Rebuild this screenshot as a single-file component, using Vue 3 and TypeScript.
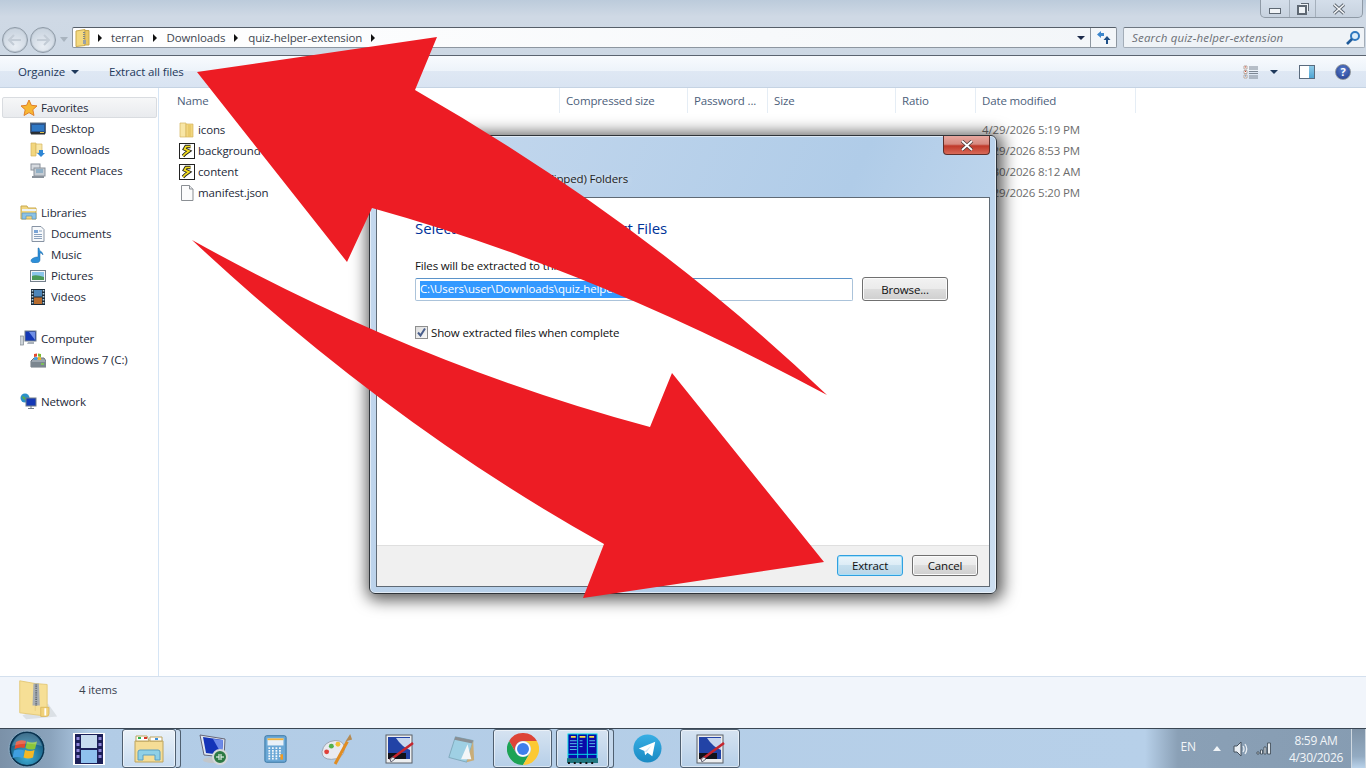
<template>
  <div class="screen">
    <div class="explorer">
      <header class="chrome">
        <div class="caption">
          <div class="caption-btns">
            <button class="cap"><span class="min-glyph"></span></button>
            <button class="cap cap-restore"><span class="restore-glyph"></span></button>
            <button class="cap cap-close">
              <svg width="14" height="12" viewBox="0 0 14 12"><path d="M2 1.500l10 9M12 1.500l-10 9" stroke="#5d6670" stroke-width="3.400" /><path d="M2 1.500l10 9M12 1.500l-10 9" stroke="#f4f6f8" stroke-width="1.600" /></svg>
            </button>
          </div>
        </div>
        <div class="navrow">
          <div class="navbtns">
            <span class="round"><svg width="16" height="12" viewBox="0 0 16 12"><path d="M7 1L2 6l5 5M2 6h12" fill="none" stroke="#c3ccd6" stroke-width="2" /></svg></span>
            <span class="round"><svg width="16" height="12" viewBox="0 0 16 12"><path d="M9 1l5 5-5 5M14 6H2" fill="none" stroke="#c3ccd6" stroke-width="2" /></svg></span>
            <span class="nav-drop"></span>
          </div>
          <div class="address">
            <svg class="addr-zip" width="15" height="18" viewBox="0 0 15 18"><path d="M1 2l9-1.500v16l-9 1z" fill="#f4d97f" stroke="#c9a94f" /><path d="M10 1.500h4V16h-4z" fill="#e9c765" stroke="#c9a94f" /><path d="M9 3v9" stroke="#80868c" stroke-width="2" stroke-dasharray="1 1" /><rect x="8" y="11" width="3" height="4" fill="#9aa2a8" /></svg>
            <span class="crumb-arrow first"></span>
            <span class="crumb">terran</span>
            <span class="crumb-arrow"></span>
            <span class="crumb">Downloads</span>
            <span class="crumb-arrow"></span>
            <span class="crumb">quiz-helper-extension</span>
            <span class="crumb-arrow"></span>
            <span class="addr-fill"></span>
            <span class="addr-drop"></span>
            <span class="addr-refresh">
              <svg width="15" height="15" viewBox="0 0 15 15"><path d="M5 1L1 4.500 5 8V6h3V3H5z" fill="#3c86cc" /><path d="M10 14v-4H7.500l3.500-4 3.500 4H12v4z" fill="#1e4f86" /></svg>
            </span>
          </div>
          <div class="search">
            <span>Search quiz-helper-extension</span>
            <svg width="16" height="16" viewBox="0 0 16 16"><circle cx="10" cy="6" r="4" fill="#dcedfa" stroke="#2f78bf" stroke-width="2" /><path d="M7 9l-5 5" stroke="#1f5a99" stroke-width="2.600" /></svg>
          </div>
        </div>
      </header>

      <div class="toolbar">
        <span class="tool">Organize<i class="tri"></i></span>
        <span class="tool extract-all">Extract all files</span>
        <span class="tool-fill"></span>
        <svg class="view-icon" width="16" height="14" viewBox="0 0 16 14"><path d="M1 1h3v3H1zM1 5.500h3v3H1zM1 10h3v3H1z" fill="#fff" stroke="#b9a9a0" /><path d="M2 2h1M2 6.500h1" stroke="#d2432f" /><path d="M2 11h1" stroke="#3c7fc4" /><path d="M6 2h9M6 4h9M6 6.500h9M6 8.500h9M6 11h9M6 13h9" stroke="#7c8794" /></svg>
        <i class="tri dark"></i>
        <span class="pane-icon"><span></span></span>
        <span class="help">?</span>
      </div>

      <div class="body">
        <aside class="sidebar">
          <section v-for="group in navGroups" :key="group.title" class="nav-group">
            <div class="nav-head" :class="{ selected: group.selected }">
              <svg width="18" height="18" viewBox="0 0 18 18" v-html="icons[group.icon]"></svg>
              <span>{{ group.title }}</span>
            </div>
            <div v-for="item in group.items" :key="item.label" class="nav-item">
              <svg width="16" height="16" viewBox="0 0 16 16" v-html="icons[item.icon]"></svg>
              <span>{{ item.label }}</span>
            </div>
          </section>
        </aside>

        <main class="files">
          <div class="columns">
            <span v-for="col in columns" :key="col.name" class="col" :style="{ width: col.width + 'px' }">{{ col.name }}</span>
          </div>
          <div class="rows">
            <div v-for="row in rows" :key="row.name" class="row">
              <span class="row-name">
                <svg width="16" height="16" viewBox="0 0 16 16" v-html="icons[row.icon]"></svg>
                <span>{{ row.name }}</span>
              </span>
              <span class="row-date">{{ row.date }}</span>
            </div>
          </div>
        </main>
      </div>

      <footer class="details">
        <svg class="big-zip" width="42" height="42" viewBox="0 0 46 44">
          <path d="M34 26l10 14-34 3-4-4z" fill="#c9ced3" opacity=".55" />
          <path d="M3 1l17 3 13 1v33l-6 1-24-3z" fill="#f6df96" stroke="#e3c877" />
          <path d="M20 4v30" stroke="#e8cd7e" />
          <path d="M18 4h6l1 24h-8z" fill="#a7adb2" />
          <path d="M21 5v24" stroke="#5f666c" stroke-width="2" stroke-dasharray="1 1" />
          <path d="M26 30h9v7a3 3 0 0 1-3 3h-6z" fill="#f1d27a" stroke="#dcb95f" />
          <path d="M31 31v8" stroke="#fff" stroke-width="2" />
        </svg>
        <span>4 items</span>
      </footer>
    </div>

    <div class="taskbar">
      <span class="start">
        <svg width="38" height="38" viewBox="0 0 38 38">
          <defs>
            <radialGradient id="orb" cx=".5" cy=".75" r=".8"><stop offset="0" stop-color="#3fb0d8" /><stop offset="1" stop-color="#0d4468" /></radialGradient>
          </defs>
          <circle cx="19" cy="19" r="18" fill="#0b3350" stroke="#8fb0c8" />
          <circle cx="19" cy="19" r="16" fill="url(#orb)" />
          <path d="M8 12q4-3 10-1l-1.500 7q-5-1.500-10 1z" fill="#e1492e" />
          <path d="M19 11.500q5 2 10 0l-2 7.500q-5 1.500-9.500-1z" fill="#8bc53a" />
          <path d="M6 20.500q5-2 10 0L14.500 28q-5-2-10 0z" fill="#3f9fe0" />
          <path d="M17 20q5 2 9.500 0L25 27.500q-5 2-9.500 0z" fill="#f5b826" />
          <path d="M4 16Q8 3 19 3t15 13q-15-5-30 0z" fill="#fff" opacity=".2" />
        </svg>
      </span>
      <span class="task video"><svg width="32" height="32" viewBox="0 0 32 32"><rect width="32" height="32" fill="#fff" /><rect x="2" y="1" width="28" height="30" fill="#1c2058" /><rect x="8" y="2" width="16" height="13" fill="#c8dcef" /><rect x="8" y="17" width="16" height="13" fill="#8fc1ee" /><path d="M5 4v24M27 4v24" stroke="#8d86d8" stroke-width="3" stroke-dasharray="3 3" /></svg></span>
      <span class="task open active explorer-btn"><svg width="32" height="30" viewBox="0 0 32 30"><path d="M2 7h28v21H2z" fill="#f5dd96" stroke="#bda45e" /><path d="M3 2h11l2 5H3zM17 3h12v4H17z" fill="#fff" stroke="#bda45e" /><path d="M5 3h3v2H5z" fill="#2eb34a" /><path d="M11 3h3v2h-3z" fill="#d8352b" /><path d="M22 4h3v2h-3z" fill="#3c8fd8" /><path d="M5 26v-8q0-2 2-2h18q2 0 2 2v8h-5v-5H10v5z" fill="#8fd0e6" stroke="#5a9fc2" /></svg></span>
      <span class="sep"></span>
      <span class="task"><svg width="32" height="32" viewBox="0 0 32 32"><path d="M3 2l25 4-1 18-20-2z" fill="#dfe6f0" stroke="#667" /><path d="M6 4l20 3-1 15-16-2z" fill="#1434b8" /><path d="M16 6l10 1-1 15z" fill="#6d8ae8" /><ellipse cx="15" cy="27" rx="9" ry="3" fill="#c2c6ca" /><circle cx="23" cy="24" r="7" fill="#2d7a44" stroke="#d5d8da" stroke-width="2" /><path d="M19 24h3M24 24h3M22 21v6M24 21v6" stroke="#fff" /></svg></span>
      <span class="task"><svg width="23" height="30" viewBox="0 0 26 32"><rect x="1" y="1" width="24" height="30" rx="2" fill="#6ba8d6" stroke="#2f6f9e" /><rect x="4" y="4" width="18" height="8" fill="#e9f1f8" /><rect x="4" y="4" width="18" height="2" fill="#f2b33d" /><path d="M5 15h16M5 18h16M5 21h16M5 24h16M5 27h12" stroke="#f4f8fb" stroke-width="2" stroke-dasharray="2 2" /><path d="M20 22v6" stroke="#f29a20" stroke-width="3" /></svg></span>
      <span class="task"><svg width="32" height="34" viewBox="0 0 34 36"><path d="M1 21q2-11 14-12 10 0 10 9-1 11-14 11-10 0-10-8z" fill="#e9eaf0" stroke="#9aa3b0" /><circle cx="6" cy="21" r="2.600" fill="#e0403a" /><circle cx="11" cy="15" r="2.600" fill="#53b14c" /><circle cx="18" cy="13" r="2.600" fill="#f2c034" /><path d="M15 34l13-24" stroke="#e08c22" stroke-width="3.200" /><path d="M26 10l5-8 2 6z" fill="#b58a52" /></svg></span>
      <span class="task"><svg width="32" height="32" viewBox="0 0 32 32" v-html="icons.paint"></svg></span>
      <span class="task"><svg width="30" height="32" viewBox="0 0 32 32"><path d="M10 3l19 4-7 23-19-5z" fill="#9fd0e4" stroke="#7fa9bb" /><path d="M10 3l19 4-1 3-19-4z" fill="#8a8f93" /><path d="M29 7l1 21-8 2z" fill="#c9ad78" /><path d="M16 27l7-16 4 16z" fill="#f3f6f8" /></svg></span>
      <span class="task open chrome-btn"><svg width="32" height="32" viewBox="0 0 32 32"><path d="M2.140 8A16 16 0 0 1 29.860 8H16A8 8 0 0 0 9.070 20z" fill="#dd4437" /><path d="M2.140 8L9.070 20A8 8 0 0 0 22.930 20L16 32A16 16 0 0 1 2.140 8z" fill="#1da355" /><path d="M29.860 8H16A8 8 0 0 1 22.930 20L16 32A16 16 0 0 0 29.860 8z" fill="#fcc934" /><circle cx="16" cy="16" r="7.500" fill="#fff" /><circle cx="16" cy="16" r="6" fill="#3f7fec" /></svg></span>
      <span class="task open term-btn"><svg width="31" height="31" viewBox="0 0 32 32"><rect x="1" y="1" width="30" height="26" fill="#0a0aa8" stroke="#08e0e6" /><path d="M11 1v26M21 1v26M1 22h30" stroke="#08e0e6" /><path d="M4 4h5M13 4h6M23 4h5" stroke="#f5e04a" stroke-width="2" /><path d="M3 8h7M3 11h7M3 14h7M3 17h7M13 8h3M13 11h3M13 14h3M23 8h6M23 11h6M23 14h6" stroke="#5cc2ec" /><rect y="26" width="32" height="5" fill="#1f7680" /><path d="M1 31h30" stroke="#111" stroke-width="2" stroke-dasharray="2 4" /></svg></span>
      <span class="sep"></span>
      <span class="task telegram"><svg width="29" height="29" viewBox="0 0 30 30"><defs><linearGradient id="tg" x1="0" y1="0" x2="0" y2="1"><stop offset="0" stop-color="#38aee4" /><stop offset="1" stop-color="#1a8ac3" /></linearGradient></defs><circle cx="15" cy="15" r="14.500" fill="url(#tg)" /><path d="M6 15l17-7-3 15-5-3.500-2.500 2.500-.7-4.500z" fill="#fff" /><path d="M12 18l7-6-5 7z" fill="#d3e6f3" /></svg></span>
      <span class="task open paint-btn"><svg width="32" height="32" viewBox="0 0 32 32" v-html="icons.paint"></svg></span>
      <span class="task-fill"></span>
      <div class="tray">
        <span class="lang">EN</span>
        <span class="tray-up"></span>
        <svg class="speaker" width="16" height="16" viewBox="0 0 16 16"><path d="M1 5h3l4-4v14l-4-4H1z" fill="#e9eef3" stroke="#44505c" /><path d="M10 5q2 3 0 6M12 3q3.500 5 0 10" fill="none" stroke="#e9eef3" stroke-width="1.300" /></svg>
        <svg class="signal" width="16" height="13" viewBox="0 0 16 13"><path d="M1 10h2v2H1zM4.500 8h2v4h-2zM8 5h2v7H8zM11.500 1h3v11h-3z" fill="#e7ecf0" stroke="#39454f" stroke-width=".8" /></svg>
        <div class="clock"><span>8:59 AM</span><span>4/30/2026</span></div>
        <span class="show-desktop"></span>
      </div>
    </div>

    <div class="dialog">
      <div class="dlg-head">
        <span class="dlg-close"><svg width="14" height="11" viewBox="0 0 14 11"><path d="M2 1l10 9M12 1L2 10" stroke="#4d3a38" stroke-width="3.400" /><path d="M2 1l10 9M12 1L2 10" stroke="#fff" stroke-width="1.800" /></svg></span>
        <span class="dlg-title">Extract Compressed (Zipped) Folders</span>
      </div>
      <div class="dlg-body">
        <div class="dlg-main">
          <h1>Select a Destination and Extract Files</h1>
          <label class="dest-label">Files will be extracted to this folder:</label>
          <div class="dest-row">
            <div class="dest-input"><span class="sel">C:\Users\user\Downloads\quiz-helper-extension</span></div>
            <button class="btn browse">Browse...</button>
          </div>
          <div class="check-row">
            <span class="check"><svg width="11" height="11" viewBox="0 0 11 11"><path d="M2 5.500l2.500 3L9 1.500" fill="none" stroke="#4a5f8c" stroke-width="2" /></svg></span>
            <span>Show extracted files when complete</span>
          </div>
        </div>
        <div class="dlg-foot">
          <button class="btn primary">Extract</button>
          <button class="btn">Cancel</button>
        </div>
      </div>
    </div>

    <svg class="arrows" width="1366" height="768" viewBox="0 0 1366 768">
      <path d="M197 72L437 37 415 90Q647 223 827 395Q595 270 372 208L347 262z" fill="#ed1c24" />
      <path d="M192 240Q415 364 650 427L672 373 824 562 583 598 604 544Q390 425 192 240z" fill="#ed1c24" />
    </svg>
  </div>
</template>

<script setup lang="ts">
interface NavItem {
  label: string
  icon: string
}

interface NavGroup {
  title: string
  icon: string
  selected?: boolean
  items: NavItem[]
}

const folder = '<path d="M1 1h6v14H1z" fill="#f8e6a6" stroke="#d5b45e" stroke-width=".7"/><path d="M7 2h7v13H7z" fill="#f2d67e" stroke="#d5b45e" stroke-width=".7"/><path d="M9 3h3v12H9z" fill="#e5c465" opacity=".7"/>'

const script = '<rect x=".5" y=".5" width="15" height="15" fill="#fff" stroke="#222"/><path d="M11.500 3.500H7L5.500 6l4.500 2-3.500 2.500L4 13" fill="none" stroke="#222" stroke-width="3.400"/><path d="M11.500 3.500H7L5.500 6l4.500 2-3.500 2.500L4 13" fill="none" stroke="#f1dc1e" stroke-width="1.700"/>'

const icons: Record<string, string> = {
  star: '<path d="M9 1l2.400 5.300 5.600.6-4.200 3.800 1.200 5.800L9 13.600l-5 2.900 1.200-5.800L1 6.900l5.600-.6z" fill="#f7b733" stroke="#e0802a"/>',
  desktop: '<rect x=".5" y="2" width="15" height="10" fill="#28548f" stroke="#5b6b7c"/><path d="M2 4h12v6H2z" fill="#2f78c4"/><path d="M1 11h14v2.500H1z" fill="#2b2f33"/><path d="M10 11.500h4" stroke="#e3c34d"/>',
  downloads: '<path d="M1 1h5v13H1z" fill="#f2d67e" stroke="#d5b45e" stroke-width=".7"/><path d="M6 2h6v9H6z" fill="#f8e6a6" stroke="#d5b45e" stroke-width=".7"/><path d="M9 8h4v3h2l-4 4-4-4h2z" fill="#2f86d4"/>',
  recent: '<rect x="1" y="1" width="9" height="6" fill="#d7dbe0" stroke="#8a929b"/><rect x="4" y="5" width="11" height="8" fill="#c5ccd3" stroke="#8a929b"/><path d="M6 7h7M6 9h7" stroke="#5d93b8"/><path d="M2 14h12" stroke="#8a929b" stroke-width="2"/>',
  libraries: '<path d="M1 2h6l1 2h8v11H1z" fill="#f2d67e" stroke="#c9a94f"/><path d="M2 5h14v2H2z" fill="#eef3f7"/><path d="M2 15v-6h14v6h-4v-3H6v3z" fill="#8cc3e6" stroke="#5a93ba" stroke-width=".7"/>',
  documents: '<path d="M2 .5h9l3 3V15.500H2z" fill="#f7f9fb" stroke="#8793a3"/><path d="M4 4h4v3H4z" fill="#7ba5d6"/><path d="M4 8.500h8M4 10.500h8M4 12.500h8M9 5h3" stroke="#8aa1bd"/>',
  music: '<path d="M9 1c0 4 4 3 4 7-1-2-3-2-3-2v7c0 2-2 3-5 3-3 0-4-1-4-2.500S4 10 8 10V1z" fill="#2d8fd8" stroke="#1f6ba8" stroke-width=".5"/>',
  pictures: '<rect x=".5" y="2.500" width="15" height="11" fill="#f4f6f8" stroke="#737f8b"/><path d="M2 4h12v5H2z" fill="#8bc6ea"/><path d="M2 8q4-2 12 1v3H2z" fill="#4a9957"/>',
  videos: '<rect x="1" y="0" width="14" height="16" fill="#1c2a38"/><rect x="4" y="1" width="8" height="6.500" fill="#4d85b8"/><rect x="4" y="8.500" width="8" height="6.500" fill="#b66c2f"/><path d="M2.500 1v14M13.500 1v14" stroke="#b6d3e4" stroke-width="1.600" stroke-dasharray="1.500 1.500"/>',
  computer: '<rect x="5" y="1" width="11" height="10" fill="#1438b6" stroke="#6f7c88"/><path d="M9 2h6v8z" fill="#6f8fe6"/><path d="M8 12h6v2H7z" fill="#aab2ba"/><rect x="0" y="6" width="3.500" height="9" fill="#cdd3d8" stroke="#7b858e" stroke-width=".7"/>',
  drive: '<path d="M1 9l3-3h10l2 3v6H1z" fill="#9ca6af" stroke="#6a747d"/><path d="M1 10h15v5H1z" fill="#7b868f"/><path d="M11 12h3" stroke="#7cd04a" stroke-width="1.500"/><path d="M4 2l3-.5v3L4 5z" fill="#e1492e"/><path d="M8 1.500l3 .5v3l-3-.5z" fill="#7ab92f"/><path d="M4 5.500l3-.5v3H4z" fill="#3f9fe0"/><path d="M8 5l3 .5V8H8z" fill="#f0b322"/>',
  network: '<circle cx="5" cy="5" r="4.500" fill="#2b8fc9"/><path d="M2 3l3 1 1 3-3-1z" fill="#59ad4c"/><rect x="6" y="5" width="10" height="8" fill="#1438b6" stroke="#707c88"/><path d="M11 13v2M8 15.500h6" stroke="#707c88"/>',
  file: '<path d="M2.500.5h8l3.500 3.500v11.500H2.500z" fill="#fcfcfc" stroke="#8b8f94"/><path d="M10.500.5V4H14" fill="#e8eaec" stroke="#8b8f94"/>',
  folder,
  script,
  paint: '<rect x="3" y="2" width="26" height="28" fill="#eceef0" stroke="#595f66"/><rect x="5" y="4" width="22" height="22" fill="#2243a6"/><path d="M13 5l14 0v12q-8-3-14-12z" fill="#c7d6ee"/><path d="M5 20h18v6H5z" fill="#11121a"/><path d="M7 27L30 10" stroke="#c6252e" stroke-width="2.600"/><path d="M8 29l4-3-2-2-3 2z" fill="#e8e8e8" stroke="#667"/>',
}

const navGroups: NavGroup[] = [
  {
    title: 'Favorites',
    icon: 'star',
    selected: true,
    items: [
      { label: 'Desktop', icon: 'desktop' },
      { label: 'Downloads', icon: 'downloads' },
      { label: 'Recent Places', icon: 'recent' },
    ],
  },
  {
    title: 'Libraries',
    icon: 'libraries',
    items: [
      { label: 'Documents', icon: 'documents' },
      { label: 'Music', icon: 'music' },
      { label: 'Pictures', icon: 'pictures' },
      { label: 'Videos', icon: 'videos' },
    ],
  },
  {
    title: 'Computer',
    icon: 'computer',
    items: [{ label: 'Windows 7 (C:)', icon: 'drive' }],
  },
  { title: 'Network', icon: 'network', items: [] },
]

const columns = [
  { name: 'Name', width: 401 },
  { name: 'Compressed size', width: 128 },
  { name: 'Password ...', width: 80 },
  { name: 'Size', width: 128 },
  { name: 'Ratio', width: 80 },
  { name: 'Date modified', width: 160 },
]

const rows = [
  { name: 'icons', icon: 'folder', date: '4/29/2026 5:19 PM' },
  { name: 'background', icon: 'script', date: '4/29/2026 8:53 PM' },
  { name: 'content', icon: 'script', date: '4/30/2026 8:12 AM' },
  { name: 'manifest.json', icon: 'file', date: '4/29/2026 5:20 PM' },
]
</script>

<style>
html,
body {
  margin: 0;
  overflow: hidden;
}
</style>

<style scoped>
.screen {
  position: relative;
  width: 1366px;
  height: 768px;
  overflow: hidden;
  display: flex;
  flex-direction: column;
  font-family: "Open Sans", "Noto Sans", sans-serif;
  font-size: 11.5px;
  letter-spacing: -0.14px;
  color: #1e2a3a;
  background: #fff;
}

.explorer {
  flex: 1;
  min-height: 0;
  display: flex;
  flex-direction: column;
}

button {
  font: inherit;
  letter-spacing: inherit;
  color: inherit;
  padding: 0;
}

.chrome {
  height: 56px;
  flex: none;
  box-sizing: border-box;
  background: linear-gradient(#bccbdb, #cfd9e5 30%, #cdd8e4);
  border-bottom: 1px solid #5b6470;
}

.caption {
  height: 18px;
  display: flex;
  justify-content: flex-end;
  padding-right: 3px;
}

.caption-btns {
  display: flex;
  height: 17px;
  border: 1px solid #8f9aa6;
  border-top: none;
  border-radius: 0 0 5px 5px;
  background: linear-gradient(#d4deea, #c7d2df);
}

.cap {
  width: 26px;
  border: none;
  border-left: 1px solid #a5b0bc;
  background: transparent;
  display: flex;
  align-items: center;
  justify-content: center;
}

.cap:first-child {
  border-left: none;
  width: 28px;
}

.cap-close {
  width: 47px;
}

.min-glyph {
  width: 10px;
  height: 4px;
  margin-top: 4px;
  background: #f1f4f7;
  border: 1px solid #5e6873;
}

.restore-glyph {
  width: 6px;
  height: 6px;
  margin: 2px 2px 0 0;
  background: #eef2f6;
  border: 2px solid #5e6873;
  box-shadow: 2px -2px 0 -1px #eef2f6, 3px -3px 0 -1px #5e6873;
}

.navrow {
  height: 37px;
  display: flex;
  align-items: flex-start;
  padding: 9px 1px 0 2px;
}

.navbtns {
  display: flex;
  align-items: center;
  width: 70px;
  height: 27px;
  margin-top: -1px;
  flex: none;
}

.round {
  width: 24px;
  height: 24px;
  margin-right: 2px;
  border: 1px solid #8d99a6;
  border-radius: 50%;
  background: radial-gradient(circle at 50% 75%, #e9eef4, #ccd6e1 70%);
  box-shadow: inset 0 0 0 1px #bfc9d3;
  display: flex;
  align-items: center;
  justify-content: center;
}

.nav-drop {
  margin-left: 2px;
  width: 0;
  height: 0;
  border: 4px solid transparent;
  border-top: 5px solid #a9b4bf;
  border-bottom: none;
}

.address {
  width: 1045px;
  height: 21px;
  margin-right: 6px;
  flex: none;
  box-sizing: border-box;
  display: flex;
  align-items: center;
  border: 1px solid #8d96a0;
  border-top-color: #555e68;
  border-radius: 2px;
  background: linear-gradient(90deg, #fff, #f3f6f9);
  padding-left: 2px;
}

.addr-zip {
  flex: none;
}

.crumb {
  color: #3e4650;
  white-space: nowrap;
}

.crumb-arrow {
  width: 0;
  height: 0;
  margin: 0 10px 0 9px;
  border: 4px solid transparent;
  border-left: 4px solid #111;
  border-right: none;
  flex: none;
}

.crumb-arrow.first {
  margin: 0 9px 0 8px;
}

.addr-fill {
  flex: 1;
}

.addr-drop {
  width: 0;
  height: 0;
  margin-right: 5px;
  border: 4px solid transparent;
  border-top: 4px solid #1c2a4a;
  border-bottom: none;
}

.addr-refresh {
  width: 25px;
  height: 19px;
  border-left: 1px solid #8d96a0;
  display: flex;
  align-items: center;
  justify-content: center;
}

.search {
  width: 242px;
  height: 21px;
  flex: none;
  box-sizing: border-box;
  display: flex;
  align-items: center;
  justify-content: space-between;
  border: 1px solid #a3adb8;
  border-top-color: #6e7781;
  border-radius: 2px;
  background: #eff3f7;
  padding: 0 3px 0 8px;
  color: #6b6f75;
  font-style: italic;
  letter-spacing: 0.18px;
}

.toolbar {
  height: 32px;
  flex: none;
  box-sizing: border-box;
  display: flex;
  align-items: center;
  padding: 0 15px 0 18px;
  background: linear-gradient(#f8fbfe, #edf3fa 48%, #dfe8f4 50%, #d9e4f2);
  border-bottom: 1px solid #c5d3e3;
  color: #1e395b;
}

.tool {
  display: flex;
  align-items: center;
}

.extract-all {
  margin-left: 30px;
}

.tool-fill {
  flex: 1;
}

.tri {
  width: 0;
  height: 0;
  margin-left: 6px;
  border: 4px solid transparent;
  border-top: 4px solid #1e395b;
  border-bottom: none;
}

.tri.dark {
  margin: 0 21px 0 11px;
}

.pane-icon {
  width: 14px;
  height: 12px;
  margin-right: 20px;
  border: 1px solid #5a6b7e;
  background: #fff;
  display: flex;
  justify-content: flex-end;
}

.pane-icon span {
  width: 5px;
  background: linear-gradient(#8fcbe8, #4fa5d4);
}

.help {
  width: 14px;
  height: 14px;
  border-radius: 50%;
  border: 1px solid #8c939b;
  background: radial-gradient(circle at 50% 35%, #5a80cf, #20388a);
  color: #fff;
  font-weight: 700;
  font-size: 11px;
  line-height: 14px;
  text-align: center;
}

.body {
  flex: 1;
  min-height: 0;
  display: flex;
}

.sidebar {
  width: 159px;
  flex: none;
  box-sizing: border-box;
  padding: 9px 1px 0 2px;
  border-right: 1px solid #d6e5f5;
  background: #fff;
}

.nav-group {
  margin-bottom: 21px;
}

.nav-head,
.nav-item {
  height: 21px;
  display: flex;
  align-items: center;
  white-space: nowrap;
}

.nav-head {
  padding-left: 17px;
  gap: 3px;
  box-sizing: border-box;
  border: 1px solid transparent;
  border-radius: 2px;
}

.nav-head.selected {
  background: linear-gradient(#f6f7f8, #e9ebee);
  border-color: #d9dce0;
}

.nav-item {
  padding-left: 28px;
  gap: 5px;
}

.files {
  flex: 1;
  min-width: 0;
  background: #fff;
}

.columns {
  height: 25px;
  display: flex;
}

.col {
  box-sizing: border-box;
  height: 25px;
  padding: 5px 0 0 6px;
  color: #4c607a;
  border-right: 1px solid #e5edf5;
  white-space: nowrap;
}

.col:first-child {
  padding-left: 18px;
}

.rows {
  padding: 6px 0 0 20px;
}

.row {
  height: 21px;
  display: grid;
  grid-template-columns: 803px auto;
  align-items: center;
}

.row-name {
  display: flex;
  align-items: center;
  gap: 3px;
}

.row-date {
  color: #6d6d6d;
}

.details {
  height: 52px;
  flex: none;
  box-sizing: border-box;
  display: flex;
  align-items: flex-start;
  gap: 20px;
  padding: 2px 0 0 17px;
  background: #f1f5fb;
  border-top: 1px solid #d4e0ee;
  color: #3a4350;
}

.details span {
  margin-top: 3px;
}

.big-zip {
  flex: none;
}

.taskbar {
  height: 40px;
  flex: none;
  box-sizing: border-box;
  display: flex;
  align-items: stretch;
  background: linear-gradient(90deg, #7b91a8 0, #8aa3bc 50px, #b2cce6 90px, #b7d0e9 1145px, #8aa0b6 1178px, #869cb2 100%);
  border-top: 1px solid #3a4653;
  font-size: 12px;
}

.start {
  width: 56px;
  flex: none;
  display: flex;
  align-items: center;
  padding-left: 8px;
  box-sizing: border-box;
}

.task {
  width: 62px;
  flex: none;
  display: flex;
  align-items: center;
  justify-content: center;
  box-sizing: border-box;
}

.task.video {
  width: 54px;
  margin: 0 6px;
}

.task.open {
  border: 1px solid #4f5f70;
  border-radius: 3px;
  background: linear-gradient(#d6e3f1, #b6cfe8);
  box-shadow: inset 0 0 0 1px rgba(255, 255, 255, 0.5);
}

.task.active {
  background: linear-gradient(#eaf1f8, #c8dcf0);
}

.explorer-btn {
  width: 54px;
}

.chrome-btn {
  width: 59px;
  margin-left: 1px;
}

.term-btn {
  width: 53px;
  margin-left: 4px;
}

.telegram {
  width: 65px;
}

.paint-btn {
  width: 60px;
}

.sep {
  width: 5px;
  box-sizing: border-box;
  margin-right: 1px;
  border: 1px solid #4f5f70;
  border-left: none;
  border-radius: 0 3px 3px 0;
  background: #c5d8ec;
  flex: none;
}

.task-fill {
  flex: 1;
}

.tray {
  display: flex;
  align-items: center;
  color: #f2f5f8;
}

.lang {
  margin-right: 17px;
  margin-top: -4px;
}

.tray-up {
  width: 0;
  height: 0;
  margin-right: 12px;
  border: 4px solid transparent;
  border-bottom: 5px solid #f0f4f7;
  border-top: none;
}

.speaker {
  margin-right: 7px;
}

.signal {
  margin-right: 12px;
}

.clock {
  width: 64px;
  display: flex;
  flex-direction: column;
  align-items: center;
  line-height: 17px;
  white-space: nowrap;
  letter-spacing: -0.3px;
}

.show-desktop {
  width: 15px;
  height: 39px;
  margin-left: 3px;
  box-sizing: border-box;
  border-left: 1px solid #cfd8e0;
  border-right: 1px solid #cfd8e0;
  background: linear-gradient(#7f93a7, #93abc2 70%, #b9d2ea);
}

.dialog {
  position: absolute;
  left: 369px;
  top: 135px;
  width: 628px;
  height: 459px;
  box-sizing: border-box;
  display: flex;
  flex-direction: column;
  padding: 0 6px 6px 6px;
  border: 1px solid #2f3439;
  border-radius: 6px;
  background: linear-gradient(115deg, #c6d9ee, #b0cce8 60%, #cddff1);
  box-shadow: inset 0 0 0 1px rgba(255, 255, 255, 0.55), 2px 2px 16px 4px rgba(0, 0, 0, 0.65);
}

.dlg-head {
  position: relative;
  height: 61px;
  flex: none;
}

.dlg-close {
  position: absolute;
  right: 0;
  top: 0;
  width: 47px;
  height: 19px;
  box-sizing: border-box;
  border: 1px solid #5e2f2b;
  border-top: none;
  border-radius: 0 0 4px 4px;
  background: linear-gradient(#e8a79f, #d78a80 45%, #c0392a 55%, #d86a58);
  display: flex;
  align-items: center;
  justify-content: center;
}

.dlg-title {
  position: absolute;
  left: 60px;
  top: 35px;
  color: #222;
  white-space: nowrap;
  text-shadow: 0 0 6px rgba(255, 255, 255, 0.8);
}

.dlg-body {
  flex: 1;
  min-height: 0;
  display: flex;
  flex-direction: column;
  border: 1px solid #5f6a75;
  background: #fff;
}

.dlg-main {
  flex: 1;
  padding: 20px 38px 0;
  color: #111;
}

.dlg-main h1 {
  margin: 0 0 19px;
  font-size: 15px;
  line-height: 20px;
  font-weight: 400;
  letter-spacing: -0.1px;
  color: #003399;
}

.dest-label {
  display: block;
  line-height: 17px;
  margin-bottom: 4px;
}

.dest-row {
  display: flex;
  align-items: flex-start;
  gap: 9px;
  height: 23px;
}

.dest-input {
  width: 438px;
  height: 23px;
  box-sizing: border-box;
  border: 1px solid #abc3da;
  border-top-color: #5b93c9;
  border-radius: 2px;
  padding: 2px 0 0 4px;
  white-space: nowrap;
  overflow: hidden;
}

.sel {
  display: inline-block;
  height: 17px;
  line-height: 16px;
  background: #3399ff;
  color: #fff;
}

.btn {
  width: 66px;
  height: 21px;
  box-sizing: border-box;
  border: 1px solid #707070;
  border-radius: 3px;
  background: linear-gradient(#f2f2f2, #ebebeb 48%, #dddddd 50%, #cfcfcf);
  box-shadow: inset 0 0 0 1px #fbfbfb;
  color: #111;
}

.browse {
  width: 86px;
  height: 24px;
  margin-top: -1px;
}

.check-row {
  display: flex;
  align-items: center;
  gap: 3px;
  margin-top: 24px;
}

.check {
  width: 13px;
  height: 13px;
  box-sizing: border-box;
  border: 1px solid #8e8f8f;
  background: linear-gradient(135deg, #dcdcdc, #fafafa);
  display: flex;
  align-items: center;
  justify-content: center;
}

.dlg-foot {
  height: 41px;
  flex: none;
  box-sizing: border-box;
  display: flex;
  justify-content: flex-end;
  align-items: center;
  gap: 9px;
  padding: 0 11px 2px 0;
  background: #f0f0f0;
  border-top: 1px solid #dfdfdf;
}

.btn.primary {
  border-color: #30a0e0;
  background: linear-gradient(#ebf5fb, #dcecf6 48%, #c6dfee 50%, #b9d6e8);
  box-shadow: inset 0 0 0 1px #a8e0f8;
}

.arrows {
  position: absolute;
  left: 0;
  top: 0;
  pointer-events: none;
}
</style>
